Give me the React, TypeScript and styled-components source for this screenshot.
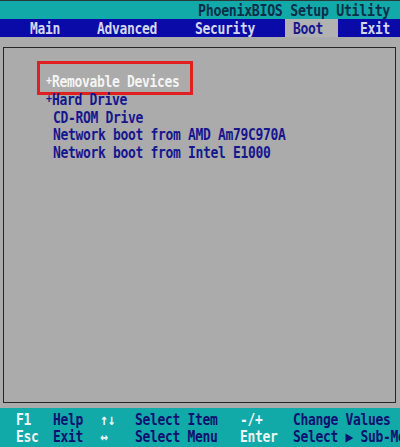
import React from "react";
import styled, { createGlobalStyle, css } from "styled-components";

const TEAL = "#12a9a9";
const BLUE = "#0a0aa8";
const GRAY = "#ababab";
const NAVY = "#16168e";

const Global = createGlobalStyle`
  html, body {
    margin: 0;
    padding: 0;
    background: ${GRAY};
  }
  #root {
    width: 400px;
    height: 447px;
    overflow: hidden;
  }
`;

const Screen = styled.div`
  width: 400px;
  height: 447px;
  display: flex;
  flex-direction: column;
  background: ${GRAY};
  font-family: "DejaVu Sans Mono", "Liberation Mono", monospace;
  font-weight: bold;
  font-size: 13px;
  letter-spacing: -0.33px;
  overflow: hidden;
`;

/* text-mode glyphs are taller than they are wide */
const Glyphs = styled.span`
  display: inline-block;
  transform: scaleY(1.17);
  transform-origin: 50% 55%;
`;

const TitleBar = styled.div`
  height: 18px;
  border-top: 1px solid #2a3a3a;
  background: ${TEAL};
  display: flex;
  align-items: center;
  justify-content: flex-end;
  padding-right: 10px;
  color: #0b2f4a;
  font-size: 13.3px;
  white-space: pre;
`;

const MenuBar = styled.nav`
  height: 18px;
  background: ${BLUE};
  display: flex;
  padding-left: 22px;
`;

const Tab = styled.div<{ $width: number }>`
  width: ${(p) => p.$width}px;
  display: flex;
  align-items: stretch;
`;

const TabLabel = styled.span<{ $active?: boolean }>`
  display: flex;
  align-items: center;
  padding: 0 8px;
  color: #d4d8ec;
  ${(p) =>
    p.$active &&
    css`
      padding-right: 15px;
      background: #b2b2b2;
      color: ${NAVY};
    `}
`;

const Body = styled.div`
  flex: 1;
  padding: 10px 4px 5px 3px;
  display: flex;
`;

const Frame = styled.div`
  flex: 1;
  border: 1px solid #262626;
  padding-top: 25px;
  display: flex;
  flex-direction: column;
`;

const Item = styled.div<{ $selected?: boolean; $indent?: boolean }>`
  position: relative;
  height: 17.75px;
  line-height: 17.75px;
  padding-left: ${(p) => (p.$indent ? 49 : 42)}px;
  color: ${(p) => (p.$selected ? "#f4f4f4" : NAVY)};
  white-space: pre;
`;

const Bullet = styled.span`
  display: inline-block;
  width: 6px;
  font-size: 10px;
  vertical-align: top;
`;

/* red callout drawn over the highlighted entry */
const Callout = styled.span`
  position: absolute;
  left: 33px;
  top: -12px;
  width: 150px;
  height: 28px;
  border: 3px solid #e0201e;
  pointer-events: none;
`;

const Footer = styled.footer`
  height: 38px;
  background: ${TEAL};
  display: grid;
  grid-template-columns: 37px 47px 35px 105px 53px 1fr;
  grid-auto-rows: 17px;
  align-content: center;
  padding-left: 16px;
  padding-top: 1px;
  white-space: pre;
  overflow: hidden;
`;

const Key = styled.span`
  color: #eef4f4;
  line-height: 17px;
`;

const Hint = styled.span`
  color: #101070;
  line-height: 17px;
`;

const tabs = [
  { label: "Main", width: 67 },
  { label: "Advanced", width: 98 },
  { label: "Security", width: 98 },
  { label: "Boot", width: 67, active: true },
  { label: "Exit", width: 48 },
];

const bootOrder = [
  { label: "Removable Devices", bullet: true, selected: true },
  { label: "Hard Drive", bullet: true },
  { label: "CD-ROM Drive" },
  { label: "Network boot from AMD Am79C970A" },
  { label: "Network boot from Intel E1000" },
];

const keys: [string, string][] = [
  ["F1", "Help"],
  ["↑↓", "Select Item"],
  ["-/+", "Change Values"],
  ["Esc", "Exit"],
  ["↔", "Select Menu"],
  ["Enter", "Select ▶ Sub-Menu"],
];

export default function App() {
  return (
    <>
      <Global />
      <Screen>
        <TitleBar>
          <Glyphs>PhoenixBIOS Setup Utility</Glyphs>
        </TitleBar>
        <MenuBar>
          {tabs.map((t) => (
            <Tab key={t.label} $width={t.width}>
              <TabLabel $active={t.active}>
                <Glyphs>{t.label}</Glyphs>
              </TabLabel>
            </Tab>
          ))}
        </MenuBar>
        <Body>
          <Frame>
            {bootOrder.map((it) => (
              <Item key={it.label} $selected={it.selected} $indent={!it.bullet}>
                <Glyphs>
                  {it.bullet && <Bullet>+</Bullet>}
                  {it.label}
                </Glyphs>
                {it.selected && <Callout />}
              </Item>
            ))}
          </Frame>
        </Body>
        <Footer>
          {keys.map(([k, h]) => (
            <React.Fragment key={k}>
              <Key>
                <Glyphs>{k}</Glyphs>
              </Key>
              <Hint>
                <Glyphs>{h}</Glyphs>
              </Hint>
            </React.Fragment>
          ))}
        </Footer>
      </Screen>
    </>
  );
}
